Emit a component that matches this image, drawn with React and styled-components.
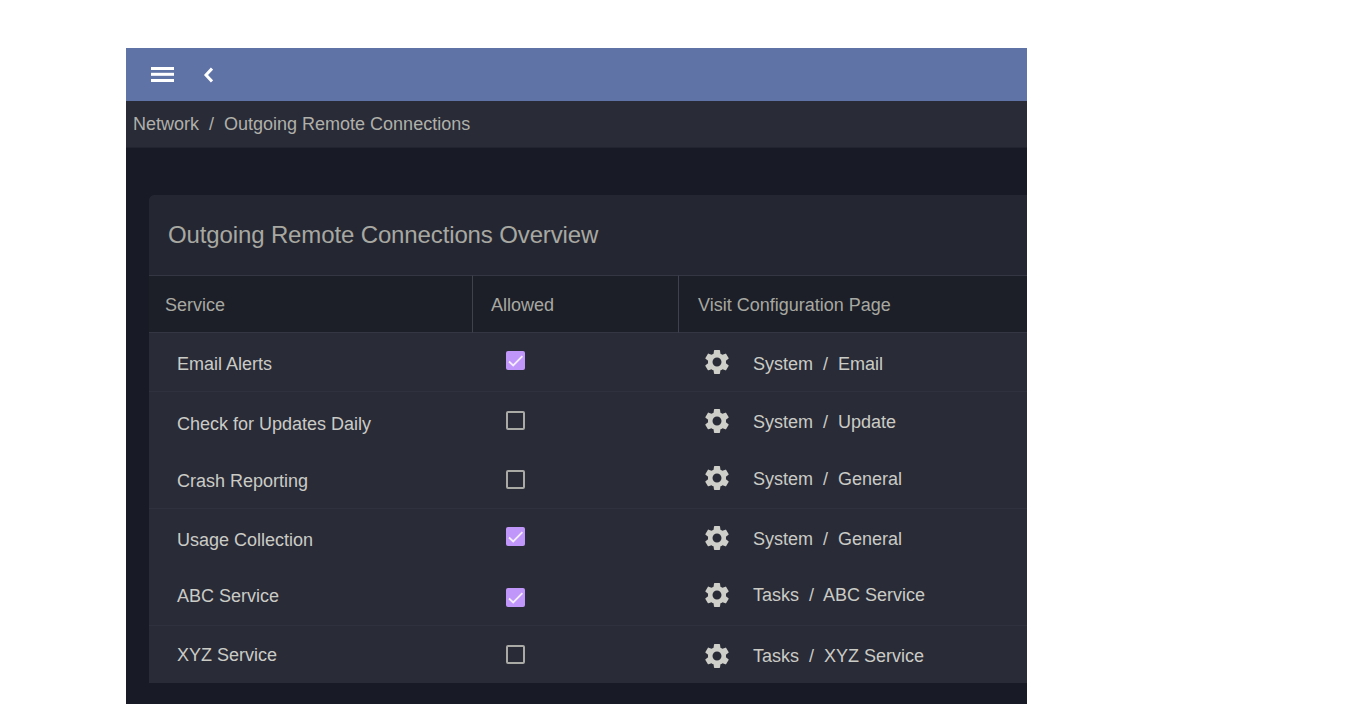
import React from 'react';
import styled, { createGlobalStyle } from 'styled-components';
import { MdSettings } from 'react-icons/md';

const GlobalStyle = createGlobalStyle`
  html, body {
    margin: 0;
    height: 100%;
    background: #fff;
    overflow: hidden;
    font-family: "Liberation Sans", Arial, sans-serif;
  }
`;

const Frame = styled.div`
  margin: 48px 0 0 126px;
  width: 901px;
  height: 656px;
  background: #181b26;
  overflow: hidden;
  display: flex;
  flex-direction: column;
`;

const Toolbar = styled.div`
  height: 53px;
  flex: none;
  background: #6073a6;
  display: flex;
  align-items: center;
  padding-left: 25px;
  gap: 29px;
  color: #fff;
`;

const Crumbs = styled.div`
  height: 47px;
  flex: none;
  box-sizing: border-box;
  background: #292b37;
  border-bottom: 1px solid #22242f;
  display: flex;
  align-items: center;
  padding-left: 7px;
  font-size: 18px;
  color: #b0b0aa;
  white-space: pre;
`;

const Content = styled.div`
  padding: 47px 0 0 23px;
`;

const Card = styled.div`
  width: 900px;
  border-radius: 6px 0 0 0;
  background: #292b37;
  overflow: hidden;
`;

const CardTitle = styled.div`
  height: 80px;
  box-sizing: border-box;
  background: #242731;
  padding-left: 19px;
  display: flex;
  align-items: center;
  font-size: 24px;
  letter-spacing: -0.13px;
  color: #a8a8a2;
`;

const Grid = styled.div`
  display: grid;
  grid-template-columns: 324px 206px 1fr;
`;

const HeadCell = styled.div`
  height: 58px;
  box-sizing: border-box;
  background: #1c1f27;
  border-top: 1px solid #343743;
  border-bottom: 1px solid #343743;
  border-right: ${({ $divider }) => ($divider ? '1px solid #3f424d' : 'none')};
  padding: 2px 0 0 ${({ $pad }) => $pad}px;
  display: flex;
  align-items: center;
  font-size: 18px;
  color: #a8a8a2;
`;

const Row = styled.div`
  display: grid;
  grid-template-columns: subgrid;
  grid-column: 1 / -1;
  height: ${({ $height }) => $height}px;
  box-sizing: border-box;
  border-bottom: ${({ $line }) => ($line ? '1px solid #2f323e' : 'none')};
  font-size: 18px;
  color: #cbcbc6;
`;

const NameCell = styled.div`
  padding: ${({ $top }) => $top}px 0 0 28px;
`;

const CheckCell = styled.div`
  padding: ${({ $top }) => $top}px 0 0 33px;
`;

const Box = styled.span`
  display: flex;
  width: 19px;
  height: 19px;
  box-sizing: border-box;
  border-radius: 2px;
  border: ${({ $on }) => ($on ? 'none' : '2px solid #a9aaa6')};
  background: ${({ $on }) => ($on ? '#c196fb' : 'transparent')};
`;

const LinkCell = styled.div`
  position: relative;
  display: flex;
  align-items: flex-start;
  padding-left: 74px;
  padding-top: ${({ $top }) => $top}px;
  white-space: pre;
`;

const Gear = styled.span`
  position: absolute;
  left: 23px;
  top: ${({ $top }) => $top}px;
  display: flex;
  font-size: 30px;
  color: #cfcfca;
`;

const MenuIcon = () => (
  <svg width="23" height="15" viewBox="0 0 23 15" fill="#fff">
    <rect y="0" width="23" height="3" />
    <rect y="5.8" width="23" height="3" />
    <rect y="12" width="23" height="3" />
  </svg>
);

const BackIcon = () => (
  <svg width="10" height="16" viewBox="0 0 10 16" fill="none" stroke="#fff" strokeWidth="3">
    <polyline points="9,1.5 3,8 9,14.5" />
  </svg>
);

const CheckIcon = () => (
  <svg width="19" height="19" viewBox="0 0 19 19" fill="none" stroke="#f3edfd" strokeWidth="1.8">
    <polyline points="3,10.5 7.2,14.4 16.4,5.2" />
  </svg>
);

const rows = [
  { name: 'Email Alerts', on: true, link: 'System  /  Email', h: 59, line: true, nameTop: 21, boxTop: 18, gearTop: 14, linkTop: 21 },
  { name: 'Check for Updates Daily', on: false, link: 'System  /  Update', h: 58, line: false, nameTop: 22, boxTop: 19, gearTop: 14, linkTop: 20 },
  { name: 'Crash Reporting', on: false, link: 'System  /  General', h: 59, line: true, nameTop: 21, boxTop: 20, gearTop: 13, linkTop: 19 },
  { name: 'Usage Collection', on: true, link: 'System  /  General', h: 58, line: false, nameTop: 21, boxTop: 18, gearTop: 14, linkTop: 20 },
  { name: 'ABC Service', on: true, link: 'Tasks  /  ABC Service', h: 59, line: true, nameTop: 19, boxTop: 21, gearTop: 13, linkTop: 18 },
  { name: 'XYZ Service', on: false, link: 'Tasks  /  XYZ Service', h: 57, line: false, nameTop: 19, boxTop: 19, gearTop: 15, linkTop: 20 },
];

const App = () => (
  <>
    <GlobalStyle />
    <Frame>
      <Toolbar>
        <MenuIcon />
        <BackIcon />
      </Toolbar>
      <Crumbs>Network  /  Outgoing Remote Connections</Crumbs>
      <Content>
        <Card>
          <CardTitle>Outgoing Remote Connections Overview</CardTitle>
          <Grid>
            <HeadCell $pad={16} $divider>Service</HeadCell>
            <HeadCell $pad={18} $divider>Allowed</HeadCell>
            <HeadCell $pad={19}>Visit Configuration Page</HeadCell>
            {rows.map((row) => (
              <Row key={row.name} $height={row.h} $line={row.line}>
                <NameCell $top={row.nameTop}>{row.name}</NameCell>
                <CheckCell $top={row.boxTop}>
                  <Box $on={row.on}>{row.on && <CheckIcon />}</Box>
                </CheckCell>
                <LinkCell $top={row.linkTop}>
                  <Gear $top={row.gearTop}><MdSettings /></Gear>
                  {row.link}
                </LinkCell>
              </Row>
            ))}
          </Grid>
        </Card>
      </Content>
    </Frame>
  </>
);

export default App;
